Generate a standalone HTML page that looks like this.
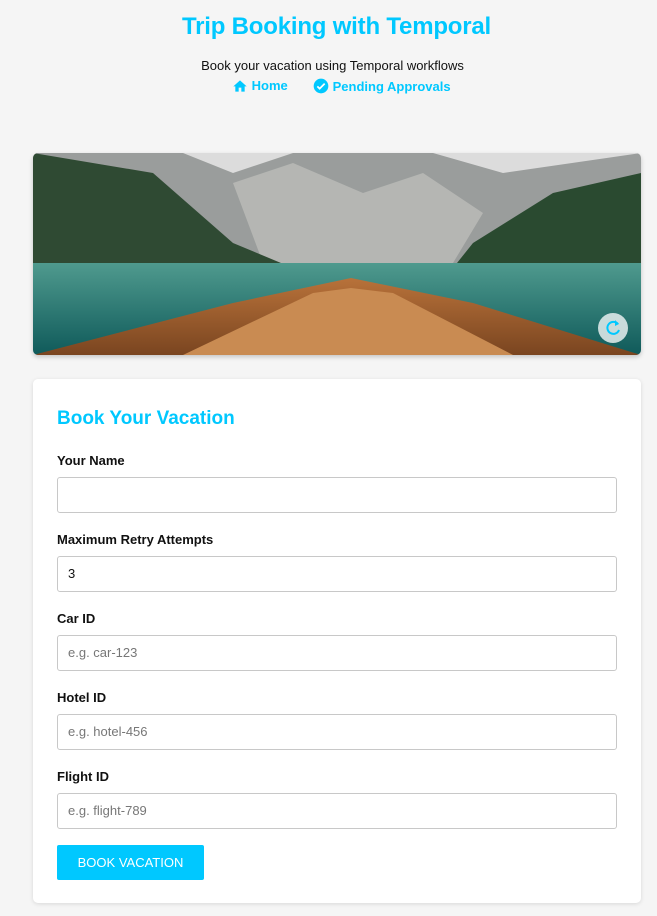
<!DOCTYPE html>
<html><head><style>
body{margin:0;background:#f5f5f5;font-family:"Liberation Sans",sans-serif;width:657px;height:916px;position:relative;overflow:hidden}
.a{position:absolute}
h1{position:absolute;top:13px;left:8px;width:657px;text-align:center;margin:0;font-size:24px;color:#00c8ff;font-weight:bold;letter-spacing:-0.2px}
.sub{top:58px;left:4px;width:657px;text-align:center;font-size:13px;color:#111}
.nav{top:78px;font-size:13px;color:#00c8ff;font-weight:bold;line-height:16px}
.img{left:33px;top:153px;width:608px;height:202px;border-radius:5px;overflow:hidden;box-shadow:0 2px 5px rgba(0,0,0,.2)}
.card{left:33px;top:379px;width:608px;height:524px;background:#fff;border-radius:5px;box-shadow:0 1px 4px rgba(0,0,0,.12)}
.card h2{position:absolute;left:24px;top:29px;margin:0;font-size:19px;color:#00c8ff}
.l{position:absolute;left:24px;font-size:13px;font-weight:bold;color:#111}
.i{position:absolute;left:24px;width:548px;height:34px;border:1px solid #c8c8c8;border-radius:3px;font-size:13px;color:#777;line-height:34px;padding-left:10px;box-sizing:content-box}
.btn{position:absolute;left:24px;top:466px;width:147px;height:35px;background:#00c8ff;color:#fff;border-radius:2px;font-size:13px;text-align:center;line-height:35px}
</style></head><body>
<h1>Trip Booking with Temporal</h1>
<div class="a sub">Book your vacation using Temporal workflows</div>
<div class="a nav" style="left:232px"><svg width="16" height="14" viewBox="0 0 24 20" style="vertical-align:-2px"><path d="M10 20v-6h4v6h5v-8h3L12 3 2 12h3v8z" fill="#00c8ff"/></svg> Home</div>
<div class="a nav" style="left:313px"><svg width="16" height="16" viewBox="0 0 24 24" style="vertical-align:-3px"><circle cx="12" cy="12" r="11" fill="#00c8ff"/><path d="M6.5 12.5l3.5 3.5 7.5-7.5" stroke="#fff" stroke-width="2.6" fill="none"/></svg> Pending Approvals</div>
<div class="a img">
<svg width="608" height="202">
<defs><linearGradient id="w" x1="0" y1="0" x2="0" y2="1"><stop offset="0" stop-color="#4f9a8e"/><stop offset="1" stop-color="#0f5a5a"/></linearGradient>
<linearGradient id="b" x1="0" y1="0" x2="0" y2="1"><stop offset="0" stop-color="#b8723a"/><stop offset="1" stop-color="#7a4520"/></linearGradient></defs>
<rect width="608" height="202" fill="#dcdcdc"/>
<path d="M0 0 L150 0 L200 20 L260 0 L400 0 L470 20 L608 0 L608 120 L0 120Z" fill="#9a9d9c"/>
<path d="M200 30 L260 10 L330 40 L390 20 L450 60 L420 110 L230 110Z" fill="#b5b6b3"/>
<path d="M0 0 L120 20 L200 90 L260 115 L0 115Z" fill="#2f4a33"/>
<path d="M608 20 L520 40 L440 90 L420 115 L608 115Z" fill="#2a4a30"/>
<rect y="110" width="608" height="92" fill="url(#w)"/>
<path d="M0 202 L200 150 L318 125 L440 150 L608 202Z" fill="url(#b)"/>
<path d="M150 202 L280 140 L318 135 L360 140 L480 202Z" fill="#c98b52"/>
<circle cx="580" cy="175" r="15" fill="#e6eeee" opacity=".85"/>
<path d="M585 171a6 6 0 1 0 1 6" stroke="#00c8ff" stroke-width="2" fill="none"/><path d="M582 167l4 4-4 2z" fill="#00c8ff"/>
</svg></div>
<div class="a card">
<h2>Book Your Vacation</h2>
<div class="l" style="top:74px">Your Name</div><div class="i" style="top:98px"></div>
<div class="l" style="top:153px">Maximum Retry Attempts</div><div class="i" style="top:177px;color:#111">3</div>
<div class="l" style="top:232px">Car ID</div><div class="i" style="top:256px">e.g. car-123</div>
<div class="l" style="top:311px">Hotel ID</div><div class="i" style="top:335px">e.g. hotel-456</div>
<div class="l" style="top:390px">Flight ID</div><div class="i" style="top:414px">e.g. flight-789</div>
<div class="btn">BOOK VACATION</div>
</div>
</body></html>
